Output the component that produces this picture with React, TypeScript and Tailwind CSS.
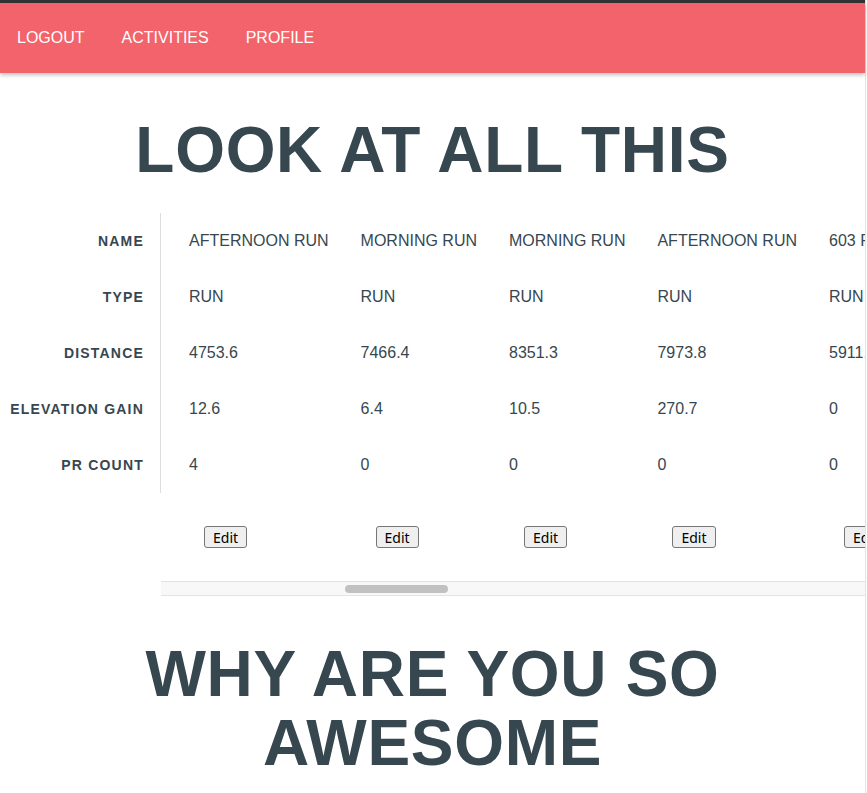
const labels = ["Name", "Type", "Distance", "Elevation Gain", "PR Count"];

const activities = [
  { name: "Afternoon Run", type: "Run", distance: "4753.6", elevation: "12.6", prs: "4" },
  { name: "Morning Run", type: "Run", distance: "7466.4", elevation: "6.4", prs: "0" },
  { name: "Morning Run", type: "Run", distance: "8351.3", elevation: "10.5", prs: "0" },
  { name: "Afternoon Run", type: "Run", distance: "7973.8", elevation: "270.7", prs: "0" },
  { name: "603 Run", type: "Run", distance: "5911.2", elevation: "0", prs: "0" },
  { name: "Evening Run", type: "Run", distance: "6120.0", elevation: "8.1", prs: "1" },
  { name: "Morning Run", type: "Run", distance: "5044.7", elevation: "3.2", prs: "0" },
];

function NavBar() {
  const items = ["Logout", "Activities", "Profile"];
  return (
    <>
      <div className="h-[3px] bg-[#333333]" />
      <nav className="relative z-10 flex h-[70px] items-center gap-[37px] bg-[#f2636b] pl-[17px] shadow-[0_2px_4px_rgba(0,0,0,0.25)]">
        {items.map((item) => (
          <a key={item} href="#" className="text-[16px] uppercase text-white">
            {item}
          </a>
        ))}
      </nav>
    </>
  );
}

function ActivityTable() {
  return (
    <div className="mt-[28px] flex items-start">
      <div className="w-[161px] shrink-0 border-r border-[#dddddd]">
        {labels.map((label) => (
          <div
            key={label}
            className="flex h-[56px] items-center justify-end pr-[16px] text-[14px] font-bold uppercase tracking-[1.2px] text-[#37474f]"
          >
            {label}
          </div>
        ))}
      </div>

      <div className="min-w-0 flex-1 overflow-hidden">
        <div className="flex pl-[12px]">
          {activities.map((a, i) => (
            <div key={i} className="flex shrink-0 flex-col whitespace-nowrap px-[16px] text-[16px] uppercase text-[#37474f]">
              <div className="flex h-[56px] items-center">{a.name}</div>
              <div className="flex h-[56px] items-center">{a.type}</div>
              <div className="flex h-[56px] items-center">{a.distance}</div>
              <div className="flex h-[56px] items-center">{a.elevation}</div>
              <div className="flex h-[56px] items-center">{a.prs}</div>
              <div className="h-[88px] pt-[33px] pl-[15px] normal-case">
                <button className="flex h-[22px] items-center rounded-[3px] border border-[#767676] bg-[#efefef] px-[8px] font-['Noto_Sans',sans-serif] text-[14px] text-black">
                  Edit
                </button>
              </div>
            </div>
          ))}
        </div>
        {/* horizontal scroll track */}
        <div className="flex h-[15px] items-center border-y border-[#e3e3e3] bg-[#f8f8f8]">
          <div className="ml-[184px] h-[8px] w-[103px] rounded-full bg-[#c1c1c1]" />
        </div>
      </div>
    </div>
  );
}

export default function App() {
  return (
    <div className="min-h-[793px] w-[866px] border-r border-[#e3e3e3] bg-white font-['Liberation_Sans',Arial,sans-serif]">
      <NavBar />
      <main>
        <h1 className="mt-[43px] text-center text-[64px] font-bold leading-[69px] tracking-[0.7px] text-[#37474f]">
          LOOK AT ALL THIS
        </h1>
        <ActivityTable />
        <h1 className="mt-[44px] text-center text-[64px] font-bold leading-[69px] tracking-[0.7px] text-[#37474f]">
          WHY ARE YOU SO AWESOME
        </h1>
      </main>
    </div>
  );
}
